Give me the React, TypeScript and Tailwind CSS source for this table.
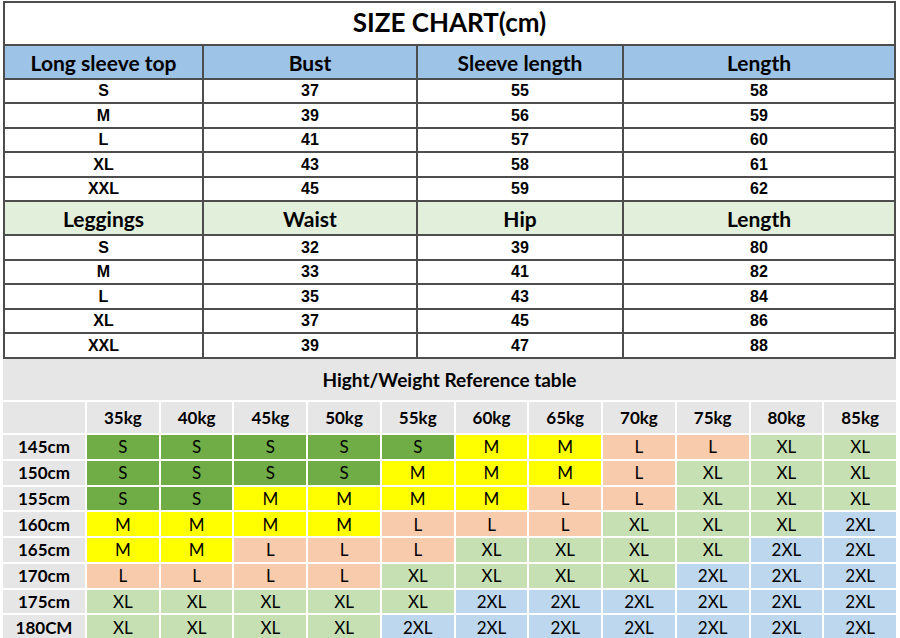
const CALIBRI = "font-['Lato','Noto_Sans',sans-serif]";
const ARIAL = "font-['Liberation_Sans',Arial,sans-serif]";

type Row = { size: string; values: number[] };

const TOPS: Row[] = [
  { size: 'S', values: [37, 55, 58] },
  { size: 'M', values: [39, 56, 59] },
  { size: 'L', values: [41, 57, 60] },
  { size: 'XL', values: [43, 58, 61] },
  { size: 'XXL', values: [45, 59, 62] },
];

const LEGGINGS: Row[] = [
  { size: 'S', values: [32, 39, 80] },
  { size: 'M', values: [33, 41, 82] },
  { size: 'L', values: [35, 43, 84] },
  { size: 'XL', values: [37, 45, 86] },
  { size: 'XXL', values: [39, 47, 88] },
];

const TOP_ROW_H = ['h-[22px]', 'h-[23px]', 'h-[22px]', 'h-[23px]', 'h-[22px]'];
const LEG_ROW_H = ['h-[23px]', 'h-[22px]', 'h-[23px]', 'h-[22px]', 'h-[23px]'];
const COL_W = ['w-[197px]', 'w-[212px]', 'w-[204px]', 'w-[270px]'];

const WEIGHTS = ['35kg', '40kg', '45kg', '50kg', '55kg', '60kg', '65kg', '70kg', '75kg', '80kg', '85kg'];

const HEIGHTS: { label: string; sizes: string[] }[] = [
  { label: '145cm', sizes: ['S', 'S', 'S', 'S', 'S', 'M', 'M', 'L', 'L', 'XL', 'XL'] },
  { label: '150cm', sizes: ['S', 'S', 'S', 'S', 'M', 'M', 'M', 'L', 'XL', 'XL', 'XL'] },
  { label: '155cm', sizes: ['S', 'S', 'M', 'M', 'M', 'M', 'L', 'L', 'XL', 'XL', 'XL'] },
  { label: '160cm', sizes: ['M', 'M', 'M', 'M', 'L', 'L', 'L', 'XL', 'XL', 'XL', '2XL'] },
  { label: '165cm', sizes: ['M', 'M', 'L', 'L', 'L', 'XL', 'XL', 'XL', 'XL', '2XL', '2XL'] },
  { label: '170cm', sizes: ['L', 'L', 'L', 'L', 'XL', 'XL', 'XL', 'XL', '2XL', '2XL', '2XL'] },
  { label: '175cm', sizes: ['XL', 'XL', 'XL', 'XL', 'XL', '2XL', '2XL', '2XL', '2XL', '2XL', '2XL'] },
  { label: '180CM', sizes: ['XL', 'XL', 'XL', 'XL', '2XL', '2XL', '2XL', '2XL', '2XL', '2XL', '2XL'] },
];

const TONE: Record<string, string> = {
  S: 'bg-[#70ad47]',
  M: 'bg-[#ffff00]',
  L: 'bg-[#f8cbad]',
  XL: 'bg-[#c6e0b4]',
  '2XL': 'bg-[#bdd7ee]',
};

function HeaderRow({ labels, tone }: { labels: string[]; tone: string }) {
  return (
    <div className="flex h-[32px] gap-[2px]">
      {labels.map((l, i) => (
        <div
          key={l + i}
          className={`flex items-center justify-center ${tone} ${CALIBRI} text-[21px] font-bold leading-none text-black ${COL_W[i]}`}
        >
          {l}
        </div>
      ))}
    </div>
  );
}

function DataRow({ row, h }: { row: Row; h: string }) {
  const cells = [row.size, ...row.values.map(String)];
  return (
    <div className={`flex gap-[2px] ${h}`}>
      {cells.map((c, i) => (
        <div
          key={i}
          className={`flex items-center justify-center bg-white ${ARIAL} text-[16px] font-bold leading-none text-black ${COL_W[i]}`}
        >
          {c}
        </div>
      ))}
    </div>
  );
}

export default function App() {
  return (
    <div className="h-[638px] w-[900px] overflow-hidden bg-white">
      <div className="ml-[3px] mt-[1px] w-[893px]">
        {/* size chart */}
        <div className="flex flex-col gap-[2px] bg-[#4d4d4d] p-[2px] pb-0">
          <div className={`flex h-[41px] items-center justify-center bg-white pb-[3px] ${CALIBRI} text-[26px] font-bold leading-none text-black`}>
            SIZE CHART(cm)
          </div>
          <HeaderRow labels={['Long sleeve top', 'Bust', 'Sleeve length', 'Length']} tone="bg-[#9dc3e6]" />
          {TOPS.map((r, i) => (
            <DataRow key={'t' + r.size} row={r} h={TOP_ROW_H[i]} />
          ))}
          <HeaderRow labels={['Leggings', 'Waist', 'Hip', 'Length']} tone="bg-[#e2efda]" />
          {LEGGINGS.map((r, i) => (
            <DataRow key={'l' + r.size} row={r} h={LEG_ROW_H[i]} />
          ))}
          <div className="h-0" />
        </div>

        {/* height / weight table */}
        <div className="bg-[#e7e6e6]">
          <div className={`flex h-[41px] items-center justify-center ${CALIBRI} text-[19px] font-bold leading-none text-black`}>
            Hight/Weight Reference table
          </div>
          <div className="grid h-[239px] grid-cols-[82px_repeat(11,minmax(0,1fr))] grid-rows-[31px_repeat(8,minmax(0,1fr))] gap-[2px] bg-white pt-[2px]">
            <div className="bg-[#e7e6e6]" />
            {WEIGHTS.map((w) => (
              <div
                key={w}
                className={`flex items-center justify-center bg-[#e7e6e6] ${CALIBRI} text-[17px] font-bold leading-none text-black`}
              >
                {w}
              </div>
            ))}
            {HEIGHTS.map((row) => [
              <div
                key={row.label}
                className={`flex items-center justify-center bg-[#e7e6e6] ${CALIBRI} text-[17px] font-bold leading-none text-black`}
              >
                {row.label}
              </div>,
              ...row.sizes.map((s, i) => (
                <div
                  key={row.label + i}
                  className={`flex items-center justify-center ${TONE[s]} ${CALIBRI} text-[17px] leading-none text-black`}
                >
                  {s}
                </div>
              )),
            ])}
          </div>
        </div>
      </div>
    </div>
  );
}
